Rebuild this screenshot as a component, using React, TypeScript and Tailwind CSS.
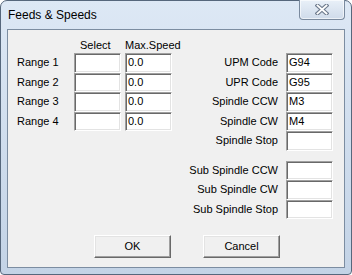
import React from "react";

const font = "font-['Liberation_Sans',Arial,sans-serif]";

function Field({ value = "" }: { value?: string }) {
  return (
    <div className="h-full w-[47px] bg-white border border-t-[#a0a0a0] border-l-[#a0a0a0] border-b-white border-r-white shadow-[inset_1px_1px_0_#696969,inset_-1px_-1px_0_#e3e3e3] pl-[2px] flex items-center text-[11px] leading-none text-black">
      {value}
    </div>
  );
}

function Btn({ label }: { label: string }) {
  return (
    <div className="w-[77px] h-[23px] flex items-center justify-center bg-[#f0f0f0] border border-t-white border-l-white border-b-[#696969] border-r-[#696969] shadow-[inset_-1px_-1px_0_#a0a0a0,inset_1px_1px_0_#e3e3e3] text-[11px] text-black">
      {label}
    </div>
  );
}

function RightRow({ label, value }: { label: string; value?: string }) {
  return (
    <div className="h-[19.5px] flex items-center justify-end gap-[8px]">
      <span className="text-[11px] leading-none text-black">{label}</span>
      <Field value={value} />
    </div>
  );
}

export default function App() {
  const ranges = ["Range 1", "Range 2", "Range 3", "Range 4"];
  return (
    <div className={`w-[352px] h-[275px] bg-white ${font}`}>
      <div className="relative w-[352px] h-[275px] flex flex-col rounded-t-[7px] rounded-b-[4px] border border-[#56677c] bg-gradient-to-b from-[#dde8f5] to-[#c3d3e6] px-[6px] pb-[6px]">
        <div className="h-[28px] flex items-center pl-[1px] text-[12px] text-black">
          Feeds &amp; Speeds
        </div>
        <div className="absolute top-[-1px] right-[6px] w-[46px] h-[20px] rounded-b-[4px] border border-[#7a8a9e] border-t-0 bg-gradient-to-b from-[#e9f0f8] to-[#cfdbea] shadow-[inset_0_0_0_1px_rgba(255,255,255,0.6)] flex items-center justify-center">
          <svg width="14" height="11" viewBox="0 0 14 11">
            <path d="M2.5 1.5 L11.5 9.5 M11.5 1.5 L2.5 9.5" stroke="#6e7b8d" strokeWidth="4" strokeLinecap="square" fill="none" />
            <path d="M2.5 1.5 L11.5 9.5 M11.5 1.5 L2.5 9.5" stroke="#ffffff" strokeWidth="1.8" strokeLinecap="square" fill="none" />
          </svg>
        </div>
        <div className="flex-1 border border-[#7c8da1] bg-[#f0f0f0] flex flex-col">
          <div className="flex pt-[7px]">
            <div className="pl-[9px] w-[164px] shrink-0">
              <div className="h-[16px] pt-[2px] grid grid-cols-[53px_47px_47px] gap-x-[4px] text-[11px] leading-[13px] text-black">
                <span />
                <span className="pl-[6px]">Select</span>
                <span>Max.Speed</span>
              </div>
              {ranges.map((r) => (
                <div key={r} className="h-[19.5px] grid grid-cols-[53px_47px_47px] gap-x-[4px] items-center">
                  <span className="text-[11px] leading-none text-black">{r}</span>
                  <Field />
                  <Field value="0.0" />
                </div>
              ))}
            </div>
            <div className="flex-1 pt-[16px] pr-[11px]">
              <RightRow label="UPM Code" value="G94" />
              <RightRow label="UPR Code" value="G95" />
              <RightRow label="Spindle CCW" value="M3" />
              <RightRow label="Spindle CW" value="M4" />
              <RightRow label="Spindle Stop" />
              <div className="mt-[10px]">
                <RightRow label="Sub Spindle CCW" />
                <RightRow label="Sub Spindle CW" />
                <RightRow label="Sub Spindle Stop" />
              </div>
            </div>
          </div>
          <div className="mt-auto pb-[9px] pl-[86px] flex gap-[32px]">
            <Btn label="OK" />
            <Btn label="Cancel" />
          </div>
        </div>
      </div>
    </div>
  );
}
